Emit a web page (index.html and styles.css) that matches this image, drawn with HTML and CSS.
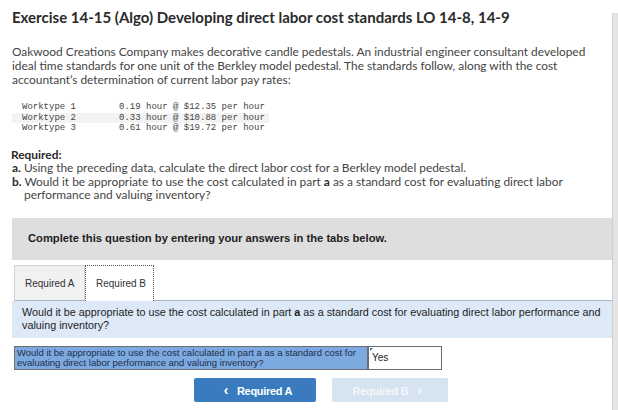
FILE: index.html
```html
<!DOCTYPE html>
<html>
<head>
<meta charset="utf-8">
<link rel="stylesheet" href="styles.css">
</head>
<body>
<div class="page">
  <div class="main">
    <h1 class="title">Exercise 14-15 (Algo) Developing direct labor cost standards LO 14-8, 14-9</h1>
    <p class="intro">Oakwood Creations Company makes decorative candle pedestals. An industrial engineer consultant developed<br>ideal time standards for one unit of the Berkley model pedestal. The standards follow, along with the cost<br>accountant’s determination of current labor pay rates:</p>
    <table class="rates">
      <tr><td class="wt">Worktype 1</td><td>0.19 hour @ $12.35 per hour</td></tr>
      <tr class="alt"><td class="wt">Worktype 2</td><td>0.33 hour @ $10.88 per hour</td></tr>
      <tr><td class="wt">Worktype 3</td><td>0.61 hour @ $19.72 per hour</td></tr>
    </table>
    <div class="required">
      <div class="req-head">Required:</div>
      <div class="req-item"><b>a.</b> Using the preceding data, calculate the direct labor cost for a Berkley model pedestal.</div>
      <div class="req-item"><b>b.</b> Would it be appropriate to use the cost calculated in part <b>a</b> as a standard cost for evaluating direct labor<br>performance and valuing inventory?</div>
    </div>
    <div class="notice">Complete this question by entering your answers in the tabs below.</div>
    <div class="tabs">
      <div class="tab">Required A</div>
      <div class="tab active">Required B</div>
      <div class="tab-rest"></div>
    </div>
    <div class="prompt">Would it be appropriate to use the cost calculated in part <b>a</b> as a standard cost for evaluating direct labor performance and<br>valuing inventory?</div>
    <div class="answer">
      <div class="answer-label">Would it be appropriate to use the cost calculated in part a as a standard cost for evaluating direct labor performance and valuing inventory?</div>
      <div class="answer-input">Yes</div>
    </div>
    <div class="nav">
      <button class="btn prev"><span class="chev">&lsaquo;</span> Required A</button>
      <button class="btn next">Required B <span class="chev">&rsaquo;</span></button>
    </div>
  </div>
  <div class="scroll"></div>
</div>
</body>
</html>
```

FILE: styles.css
```css
html, body {
  margin: 0;
  padding: 0;
  background: #fff;
}
.page {
  display: flex;
  width: 618px;
  height: 410px;
  overflow: hidden;
}
.main {
  flex: 1;
  padding: 0 0 0 12px;
  font-family: "Lato", "Liberation Sans", sans-serif;
  color: #333;
}
.scroll {
  width: 5px;
  margin-top: 13px;
  background: #e4e4e4;
  border-left: 1px solid #d0d0d0;
}
.title {
  margin: 8px 0 0;
  font-size: 15px;
  line-height: 18px;
  font-weight: 700;
  color: #2a2a2a;
}
.intro {
  margin: 19px 0 0;
  font-size: 11.9px;
  line-height: 14px;
  color: #444;
}
.rates {
  margin: 15px 0 0;
  border-collapse: collapse;
  font-family: "Liberation Mono", "DejaVu Sans Mono", monospace;
  font-size: 9px;
  color: #444;
}
.rates td {
  padding: 0;
  height: 10.5px;
  line-height: 10.5px;
}
.rates td.wt {
  padding-left: 10px;
  width: 97px;
}
.rates td + td {
  padding-right: 4px;
}
.rates tr.alt td {
  background: #f3f3f3;
}
.required {
  margin-top: 14px;
  font-size: 11.9px;
  line-height: 13.5px;
  color: #444;
}
.req-head {
  font-weight: 700;
  color: #2a2a2a;
  margin-left: -1px;
}
.req-item {
  padding-left: 12px;
  text-indent: -12px;
}
.req-item b {
  color: #2a2a2a;
}
.notice {
  margin-top: 16px;
  height: 42px;
  box-sizing: border-box;
  padding: 14px 0 0 16px;
  background: #dedede;
  font-family: "Liberation Sans", Arial, sans-serif;
  font-weight: 700;
  font-size: 11.2px;
  color: #222;
}
.tabs {
  display: flex;
  margin-top: 5px;
  height: 36px;
}
.tab {
  box-sizing: border-box;
  padding: 12px 0 0 10px;
  font-family: "Liberation Sans", Arial, sans-serif;
  font-size: 10px;
  color: #333;
}
.tab:first-child {
  margin-left: 2px;
  width: 71px;
  background: #f1f1f1;
  border: 1px solid #d2d2d2;
  border-bottom: 1px solid #a9b6c4;
}
.tab.active {
  width: 69px;
  background: #fff;
  border: 1px dotted #555;
  border-bottom: none;
}
.tab-rest {
  flex: 1;
  border-bottom: 1px solid #a9b6c4;
}
.prompt {
  height: 37px;
  box-sizing: border-box;
  padding: 5px 0 0 10px;
  background: #dde9f7;
  font-family: "Liberation Sans", Arial, sans-serif;
  font-size: 10.8px;
  line-height: 13px;
  color: #222;
  white-space: nowrap;
  overflow: hidden;
}
.answer {
  display: flex;
  margin: 8px 0 0 2px;
  width: 428px;
  height: 24px;
  box-sizing: border-box;
  border: 1px solid #6d6d6d;
}
.answer-label {
  width: 353px;
  box-sizing: border-box;
  padding: 1px 0 0 2px;
  background: #7ca9e0;
  font-family: "Liberation Sans", Arial, sans-serif;
  font-size: 9.5px;
  line-height: 10px;
  color: #1f2f4a;
  border-right: 1px solid #6d6d6d;
}
.answer-input {
  position: relative;
  flex: 1;
  padding: 5px 0 0 3px;
  font-family: "Liberation Sans", Arial, sans-serif;
  font-size: 10px;
  color: #222;
  border-left: 1px solid #6d6d6d;
}
.answer-input::before {
  content: "";
  position: absolute;
  left: 1px;
  top: 1px;
  border-left: 3px solid #3b6fb0;
  border-bottom: 3px solid transparent;
}
.nav {
  display: flex;
  gap: 16px;
  margin: 8px 0 0 182px;
}
.btn {
  height: 24px;
  border: none;
  border-radius: 2px;
  font-family: "Liberation Sans", Arial, sans-serif;
  font-weight: 700;
  font-size: 11px;
  letter-spacing: -0.3px;
  color: #fff;
  padding: 0;
}
.btn.prev {
  width: 122px;
  background: #3a7bc0;
}
.btn.next {
  width: 116px;
  background: #d6e3f0;
  color: #f4f7fb;
}
.chev {
  font-size: 14px;
  margin: 0 6px;
}
```
